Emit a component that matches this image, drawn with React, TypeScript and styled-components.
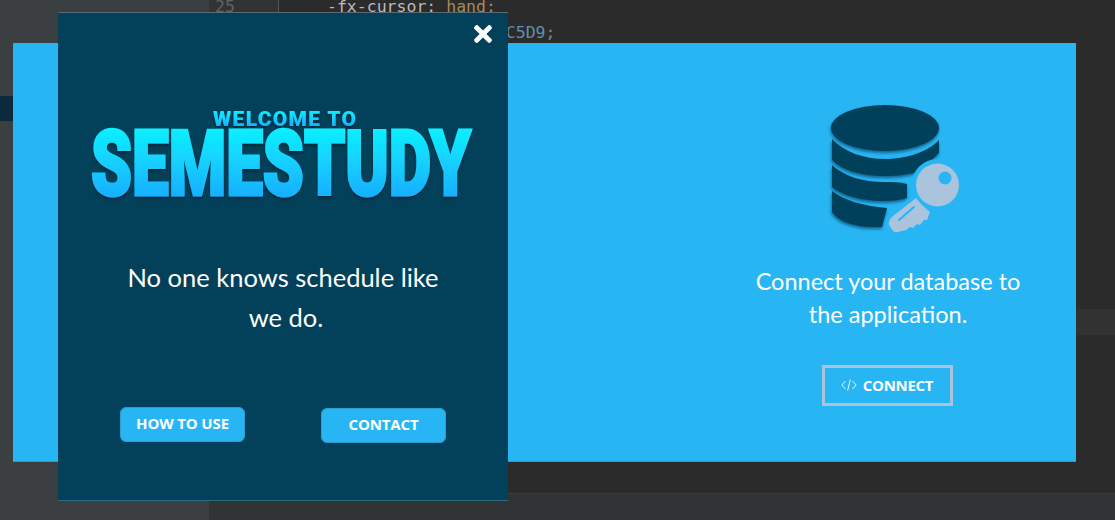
import React from "react";
import styled, { createGlobalStyle } from "styled-components";
import { FaTimes } from "react-icons/fa";

const GlobalStyle = createGlobalStyle`
  html, body {
    margin: 0;
    padding: 0;
    background: #2b2b2b;
    overflow: hidden;
  }
`;

const Ide = styled.div`
  position: relative;
  display: flex;
  width: 1115px;
  height: 520px;
  overflow: hidden;
  background: #2b2b2b;
`;

const ProjectPanel = styled.div`
  width: 209px;
  padding-top: 96px;
  box-sizing: border-box;
  background: #3c3f41;
`;

const SelectedFile = styled.div`
  height: 25px;
  background: #0d293e;
`;

const EditorColumn = styled.div`
  flex: 1;
  display: flex;
  flex-direction: column;
`;

const EditorPane = styled.div`
  flex: 1;
  display: flex;
  flex-direction: column;
  margin-top: -6px;
  overflow: hidden;
`;

const CodeLine = styled.div<{ $active?: boolean; $gap?: number }>`
  display: flex;
  flex: none;
  height: 26px;
  margin-top: ${(p) => p.$gap || 0}px;
  background: ${(p) => (p.$active ? "#323232" : "transparent")};
  font: 16.5px/26px "DejaVu Sans Mono", monospace;
`;

const LineNumber = styled.div`
  width: 70px;
  padding-left: 6px;
  box-sizing: border-box;
  background: #313335;
  border-right: 1px solid #555555;
  color: #606366;
  flex: none;
`;

const CodeText = styled.div`
  padding-left: 48px;
  white-space: pre;
  color: #a9b7c6;
`;

const PropName = styled.span`
  color: #bababa;
`;

const PropValue = styled.span<{ $tone: "keyword" | "hex" }>`
  color: ${(p) => (p.$tone === "keyword" ? "#a58a5c" : "#5f8fb0")};
`;

const StatusBar = styled.div`
  height: 27px;
  box-sizing: border-box;
  background: #313335;
  border-top: 1px solid #3b3b3b;
`;

const ConnectWindow = styled.div`
  position: absolute;
  left: 13px;
  top: 43px;
  width: 1063px;
  height: 419px;
  display: flex;
  justify-content: flex-end;
  box-sizing: border-box;
  background: #27b6f3;
  border-bottom: 1px solid #1f9fd6;
`;

const ConnectColumn = styled.div`
  width: 376px;
  padding-top: 52px;
  display: flex;
  flex-direction: column;
  align-items: center;
`;

const DatabaseIcon = styled.svg`
  display: block;
  width: 165px;
  height: 145px;
  margin: 0 0 7px 9px;
`;

const ConnectText = styled.p`
  margin: 18px 0 34px;
  font: 400 23.5px/33px Lato, "Open Sans", sans-serif;
  color: #ffffff;
  text-align: center;
`;

const ConnectButton = styled.button`
  display: flex;
  align-items: center;
  justify-content: center;
  gap: 6px;
  width: 131px;
  height: 41px;
  margin-right: 2px;
  padding: 0 0 2px;
  background: transparent;
  border: 3px solid #a9c4dc;
  color: #ffffff;
  font: 700 15px "Open Sans", sans-serif;
  letter-spacing: -0.3px;
`;

const Modal = styled.div`
  position: absolute;
  left: 58px;
  top: 12px;
  width: 450px;
  height: 489px;
  box-sizing: border-box;
  display: flex;
  flex-direction: column;
  align-items: center;
  padding-top: 90px;
  background: #03405a;
  border-top: 1px solid #5b6b73;
  border-bottom: 1px solid #2c6a8a;
`;

const CloseButton = styled.button`
  position: absolute;
  right: 12px;
  top: 8px;
  padding: 0;
  display: flex;
  background: none;
  border: none;
  color: #ffffff;
`;

const Logo = styled.svg`
  display: block;
  width: 400px;
  height: 105px;
`;

const Slogan = styled.p`
  margin: 49px 0 0;
  font: 400 25.5px/40px Lato, "Open Sans", sans-serif;
  color: #ffffff;
  text-align: center;
`;

const ButtonRow = styled.div`
  display: flex;
  justify-content: space-between;
  align-items: flex-start;
  align-self: stretch;
  margin-top: 70px;
  padding: 0 62px;
`;

const ModalButton = styled.button<{ $drop?: number }>`
  width: 125px;
  height: 35px;
  margin-top: ${(p) => p.$drop || 0}px;
  padding: 0 0 4px;
  background: #27b6f3;
  border: 1px solid #2a9dd2;
  border-radius: 6px;
  color: #ffffff;
  font: 700 15px "Open Sans", sans-serif;
  letter-spacing: -0.15px;
`;

const KEY_SHAFT =
  "M106 103L83 121Q78 125 79 130L83 136Q85 138 88 137L96 135L100 132L103 133L107 129L110 130L114 125L117 125L120 117L112 110Z";

function DatabaseKey() {
  return (
    <DatabaseIcon viewBox="0 0 165 145">
      <defs>
        <filter id="dbShadow" x="-10%" y="-10%" width="120%" height="120%">
          <feDropShadow dx="-0.500" dy="2" stdDeviation="1.800" floodColor="#07557c" floodOpacity="0.9" />
        </filter>
      </defs>
      <g fill="#03405a" filter="url(#dbShadow)">
        <ellipse cx="75" cy="33" rx="54" ry="23" />
        <path d="M22 44C34 57 54 64 75 64S118 57 129 45V58L110 76C98 80 87 81 75 81 50 81 32 75 22 65Z" />
        <path d="M22 70C34 81 52 87 75 87 82 87 90 87 97 89V103C90 105 83 106 75 106 50 106 32 100 22 92Z" />
        <path d="M22 96C34 105 52 111 77 113L72 132C44 133 28 126 22 117Z" />
      </g>
      <circle cx="127.500" cy="90" r="26" fill="#27b6f3" />
      <path d={KEY_SHAFT} fill="#27b6f3" stroke="#27b6f3" strokeWidth="8" strokeLinejoin="round" />
      <path d={KEY_SHAFT} fill="#a9c4dc" />
      <circle cx="127.500" cy="90" r="21.500" fill="#a9c4dc" />
      <circle cx="135" cy="83" r="6.500" fill="#27b6f3" />
      <path d="M89 125L104 112" stroke="#27b6f3" strokeWidth="2" strokeLinecap="round" />
    </DatabaseIcon>
  );
}

function SemestudyLogo() {
  return (
    <Logo viewBox="0 0 400 105">
      <defs>
        <linearGradient id="logoFill" x1="0" y1="0" x2="0" y2="1">
          <stop offset="0" stopColor="#0cffff" />
          <stop offset="1" stopColor="#1c9cff" />
        </linearGradient>
        <filter id="logoShadow" x="-5%" y="-5%" width="110%" height="115%">
          <feDropShadow dx="0" dy="2" stdDeviation="1" floodColor="#01202f" floodOpacity="0.9" />
        </filter>
      </defs>
      <g filter="url(#logoShadow)" fontFamily="Roboto, sans-serif" fontWeight="900" fill="url(#logoFill)">
        <text x="130" y="23" fontSize="21" textLength="143" lengthAdjust="spacing">
          WELCOME TO
        </text>
        <text
          x="8"
          y="92"
          fontSize="90"
          textLength="380"
          lengthAdjust="spacingAndGlyphs"
          stroke="url(#logoFill)"
          strokeWidth="3"
        >
          SEMESTUDY
        </text>
      </g>
    </Logo>
  );
}

function CodeGlyph() {
  return (
    <svg width="16" height="12" viewBox="0 0 16 12" fill="none" stroke="#ffffff" strokeWidth="0.900">
      <path d="M4.500 2L0.800 6l3.700 4M11.500 2l3.700 4-3.700 4M9.300 0.500L6.700 11.500" />
    </svg>
  );
}

export default function App() {
  return (
    <Ide>
      <GlobalStyle />
      <ProjectPanel>
        <SelectedFile />
      </ProjectPanel>
      <EditorColumn>
        <EditorPane>
          <CodeLine>
            <LineNumber>25</LineNumber>
            <CodeText>
              <PropName>-fx-cursor: </PropName>
              <PropValue $tone="keyword">hand;</PropValue>
            </CodeText>
          </CodeLine>
          <CodeLine>
            <LineNumber />
            <CodeText>
              <PropName>-fx-text-fill: </PropName>
              <PropValue $tone="hex">#A9C5D9;</PropValue>
            </CodeText>
          </CodeLine>
          <CodeLine $active $gap={263} />
        </EditorPane>
        <StatusBar />
      </EditorColumn>

      <ConnectWindow>
        <ConnectColumn>
          <DatabaseKey />
          <ConnectText>
            Connect your database to
            <br />
            the application.
          </ConnectText>
          <ConnectButton>
            <CodeGlyph />
            CONNECT
          </ConnectButton>
        </ConnectColumn>
      </ConnectWindow>

      <Modal>
        <CloseButton>
          <FaTimes size={26} />
        </CloseButton>
        <SemestudyLogo />
        <Slogan>
          No one knows schedule like
          <br />
          &nbsp;we do.
        </Slogan>
        <ButtonRow>
          <ModalButton>HOW TO USE</ModalButton>
          <ModalButton $drop={1}>CONTACT</ModalButton>
        </ButtonRow>
      </Modal>
    </Ide>
  );
}
